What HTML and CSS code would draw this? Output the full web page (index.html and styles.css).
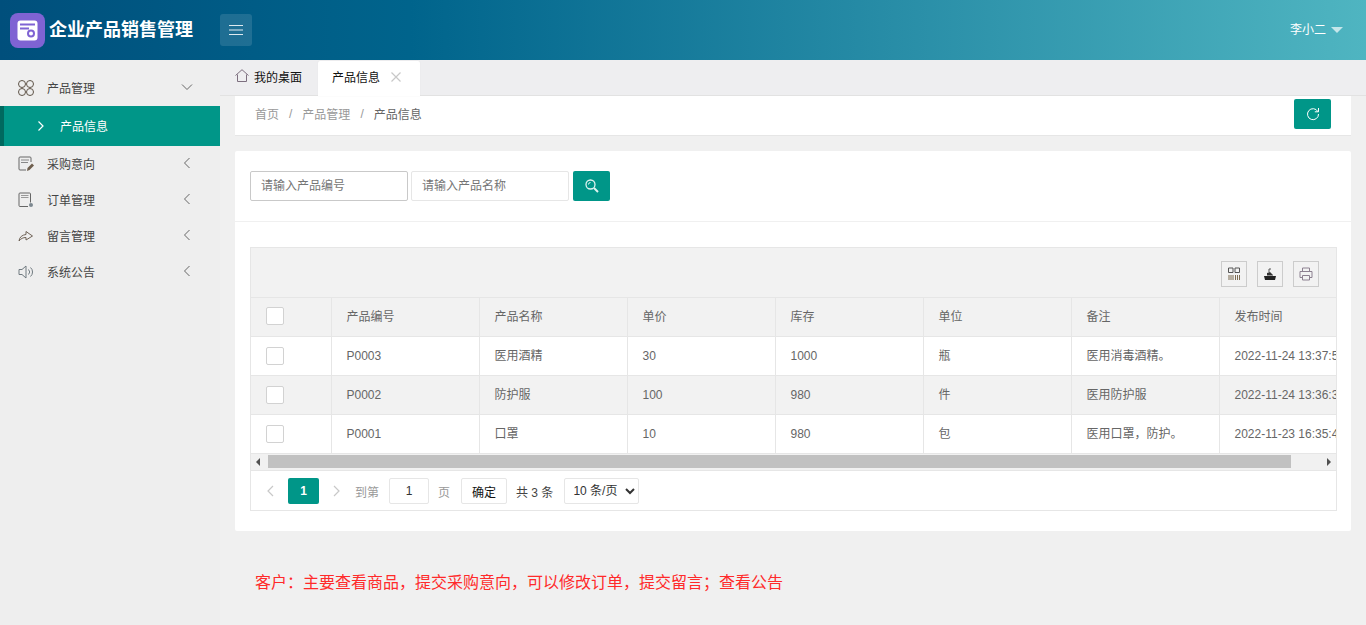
FILE: index.html
```html
<!DOCTYPE html>
<html lang="zh-CN">
<head>
<meta charset="utf-8">
<title>企业产品销售管理</title>
<link rel="stylesheet" href="styles.css">
</head>
<body>
<header class="topbar">
  <div class="brand">
    <span class="logo">
      <svg width="35" height="35" viewBox="0 0 35 35"><rect width="35" height="35" rx="8" fill="#7f63d3"/><rect x="7.500" y="7.500" width="20" height="20" rx="3" fill="#fff"/><path d="M10 11.500h15M10 15.500h9" stroke="#7f63d3" stroke-width="2" fill="none"/><circle cx="21" cy="20.500" r="3" fill="none" stroke="#7f63d3" stroke-width="2"/></svg>
    </span>
    <span class="brand-name">企业产品销售管理</span>
  </div>
  <button class="hamburger" type="button" aria-label="菜单">
    <svg width="14" height="10" viewBox="0 0 14 10"><path d="M0 .5h14M0 5h14M0 9.500h14" stroke="#dfeaf0" stroke-width="1"/></svg>
  </button>
  <div class="user">李小二<span class="caret"></span></div>
</header>
<div class="body-row">
  <aside class="sidebar">
    <div class="menu-item">
      <svg class="menu-icon" viewBox="0 0 16 16"><g fill="none" stroke="#5f5448" stroke-width="1"><circle cx="4" cy="4" r="3.500"/><circle cx="12" cy="4" r="3.500"/><circle cx="4" cy="12" r="3.500"/><circle cx="12" cy="12" r="3.500"/></g></svg>
      <span class="menu-label">产品管理</span>
      <svg class="chev" viewBox="0 0 12 12"><path d="M1 3.500l5 5 5-5" fill="none" stroke="#666" stroke-width="1"/></svg>
    </div>
    <div class="sub-item">
      <svg class="sub-chev" viewBox="0 0 8 12"><path d="M1.500 1.500L6 6l-4.500 4.500" fill="none" stroke="#fff" stroke-width="1.200"/></svg>
      <span class="sub-label">产品信息</span>
    </div>
    <div class="menu-item">
      <svg class="menu-icon" viewBox="0 0 16 16"><path d="M13 6V2a1 1 0 0 0-1-1H2a1 1 0 0 0-1 1v11a1 1 0 0 0 1 1h6" fill="none" stroke="#666"/><path d="M3 4h8M3 6.500h7" stroke="#888"/><path d="M9 15l.5-3L14 7.500l2 2L11.500 14z" fill="#6f5f4e"/></svg>
      <span class="menu-label">采购意向</span>
      <svg class="chev" viewBox="0 0 12 12"><path d="M8.500 1l-5 5 5 5" fill="none" stroke="#666"/></svg>
    </div>
    <div class="menu-item">
      <svg class="menu-icon" viewBox="0 0 16 16"><path d="M10 14.500H2a1 1 0 0 1-1-1V2a1 1 0 0 1 1-1h9.500a1 1 0 0 1 1 1v8.500" fill="none" stroke="#666"/><path d="M3 3.500h7.500M3 5.500h7.500" stroke="#999"/><circle cx="13" cy="13" r="2" fill="#7d8890"/></svg>
      <span class="menu-label">订单管理</span>
      <svg class="chev" viewBox="0 0 12 12"><path d="M8.500 1l-5 5 5 5" fill="none" stroke="#666"/></svg>
    </div>
    <div class="menu-item">
      <svg class="menu-icon" viewBox="0 0 16 16"><path d="M1 13c.5-4 3-6 7-6.500V3.500L14.500 8 8 12V9.500c-3 0-5 1-7 3.500z" fill="none" stroke="#6f6256"/></svg>
      <span class="menu-label">留言管理</span>
      <svg class="chev" viewBox="0 0 12 12"><path d="M8.500 1l-5 5 5 5" fill="none" stroke="#666"/></svg>
    </div>
    <div class="menu-item">
      <svg class="menu-icon" viewBox="0 0 16 16"><path d="M1 5.500h3L8 2v12l-4-3.500H1z" fill="none" stroke="#707a80"/><path d="M10.500 5.500a3.500 3.500 0 0 1 0 5M12.500 3.500a6 6 0 0 1 0 9" fill="none" stroke="#707a80"/></svg>
      <span class="menu-label">系统公告</span>
      <svg class="chev" viewBox="0 0 12 12"><path d="M8.500 1l-5 5 5 5" fill="none" stroke="#666"/></svg>
    </div>
  </aside>
  <main class="main">
    <nav class="tabs">
      <div class="tab">
        <svg class="tab-home" viewBox="0 0 14 13"><path d="M.5 6.500L7 .7l6.500 5.800M2.500 5.500v7h9v-7" fill="none" stroke="#7d6f7f"/></svg>
        <span>我的桌面</span>
      </div>
      <div class="tab tab-active">
        <span>产品信息</span>
        <svg class="tab-close" viewBox="0 0 10 10"><path d="M.5.500l9 9M9.500.500l-9 9" stroke="#c8c8c8" stroke-width="1.200"/></svg>
      </div>
    </nav>
    <div class="content">
      <div class="crumbs">
        <span class="crumb">首页</span><span class="sep">/</span>
        <span class="crumb">产品管理</span><span class="sep">/</span>
        <span class="crumb crumb-current">产品信息</span>
        <button class="btn btn-refresh" type="button" aria-label="刷新">
          <svg width="14" height="14" viewBox="0 0 14 14"><path d="M11.800 4.500A5.500 5.500 0 1 0 12.500 7" fill="none" stroke="#fff"/><path d="M12.500 1v3.800H8.800" fill="none" stroke="#fff"/></svg>
        </button>
      </div>
      <section class="card">
        <div class="search">
          <input class="field field-focus" placeholder="请输入产品编号">
          <input class="field" placeholder="请输入产品名称">
          <button class="btn btn-search" type="button" aria-label="搜索">
            <svg width="14" height="14" viewBox="0 0 14 14"><circle cx="5.500" cy="5.500" r="4.500" fill="none" stroke="#dff3f0" stroke-width="1.300"/><path d="M9 9l4 4" stroke="#dff3f0" stroke-width="2"/><path d="M3.500 5.500a2 2 0 0 1 2-2" fill="none" stroke="#dff3f0"/></svg>
          </button>
        </div>
        <div class="table-wrap">
          <div class="table-box">
            <div class="toolbar">
              <span class="tool"><svg width="12" height="14" viewBox="0 0 12 14"><path d="M.5 1h4.500v4.500H.5zM7 1h4.500v4.500H7z" fill="none" stroke="#555"/><path d="M1 8v5M3 8v5M5 8v5M7.500 8v5M9.500 8v5M11.500 8v5" stroke="#7b6a50"/></svg></span>
              <span class="tool"><svg width="14" height="14" viewBox="0 0 14 14"><path d="M1 9h12l-1 4H2z" fill="#222"/><path d="M4 8.500V6l3-1 3 3v.5z" fill="#333"/><path d="M6 5V2h2" fill="none" stroke="#555"/></svg></span>
              <span class="tool"><svg width="14" height="14" viewBox="0 0 14 14"><path d="M3.500 4V1h7v3M3.500 10.500H1V4.500h12v6h-2.500M3.500 8.500h7V13h-7z" fill="none" stroke="#8c8090"/></svg></span>
            </div>
            <div class="grid-clip">
              <table class="grid">
                <colgroup><col class="col-check"><col class="col-data"><col class="col-data"><col class="col-data"><col class="col-data"><col class="col-data"><col class="col-data"><col class="col-data"></colgroup>
                <thead>
                  <tr><th class="c-check"><span class="check"></span></th><th>产品编号</th><th>产品名称</th><th>单价</th><th>库存</th><th>单位</th><th>备注</th><th>发布时间</th></tr>
                </thead>
                <tbody>
                  <tr><td class="c-check"><span class="check"></span></td><td>P0003</td><td>医用酒精</td><td>30</td><td>1000</td><td>瓶</td><td>医用消毒酒精。</td><td>2022-11-24 13:37:58</td></tr>
                  <tr class="alt"><td class="c-check"><span class="check"></span></td><td>P0002</td><td>防护服</td><td>100</td><td>980</td><td>件</td><td>医用防护服</td><td>2022-11-24 13:36:32</td></tr>
                  <tr><td class="c-check"><span class="check"></span></td><td>P0001</td><td>口罩</td><td>10</td><td>980</td><td>包</td><td>医用口罩，防护。</td><td>2022-11-23 16:35:47</td></tr>
                </tbody>
              </table>
            </div>
            <div class="hscroll">
              <span class="arrow arrow-left"></span>
              <span class="thumb"></span>
              <span class="arrow arrow-right"></span>
            </div>
            <div class="pager">
              <svg class="page-arrow" viewBox="0 0 8 12"><path d="M7 1L2 6l5 5" fill="none" stroke="#c8c8c8" stroke-width="1.200"/></svg>
              <span class="page-current">1</span>
              <svg class="page-arrow page-next" viewBox="0 0 8 12"><path d="M1 1l5 5-5 5" fill="none" stroke="#c8c8c8" stroke-width="1.200"/></svg>
              <span class="pager-muted">到第</span>
              <input class="page-input" value="1">
              <span class="pager-muted">页</span>
              <button class="page-ok" type="button">确定</button>
              <span class="pager-total">共 3 条</span>
              <select class="page-size"><option>10 条/页</option></select>
            </div>
          </div>
        </div>
      </section>
      <p class="note">客户：主要查看商品，提交采购意向，可以修改订单，提交留言；查看公告</p>
    </div>
  </main>
</div>
</body>
</html>
```
FILE: styles.css
```css
* { box-sizing: border-box; }
html, body { margin: 0; height: 625px; overflow: hidden; }
body {
  font-family: "Liberation Sans", "Noto Sans CJK SC", sans-serif;
  font-size: 12px;
  color: #666;
  background: #f0f0f0;
}
button, input, select { font-family: inherit; }

.topbar {
  height: 60px;
  display: flex;
  align-items: center;
  background: linear-gradient(to right, #004f7c 0%, #00648c 30%, #4fb5c1 100%);
}
.brand { width: 220px; display: flex; align-items: center; padding-left: 10px; gap: 4px; }
.logo { width: 35px; height: 35px; display: block; }
.logo svg { display: block; }
.brand-name { font-size: 18px; font-weight: 700; color: #fff; line-height: 35px; }
.hamburger {
  width: 32px; height: 32px; padding: 0; border: 0; border-radius: 3px;
  background: rgba(255, 255, 255, .12);
  display: flex; align-items: center; justify-content: center;
}
.user { margin-left: auto; margin-right: 23px; padding-bottom: 4px; color: #fff; display: flex; align-items: center; }
.caret {
  margin-left: 5px; margin-top: 4px; width: 0; height: 0;
  border: 6px solid transparent; border-top: 6px solid #c5e6ea; border-bottom: 0;
}

.body-row { display: flex; height: 565px; }
.sidebar { width: 220px; flex: none; background: #eeeeee; padding-top: 10px; }
.menu-item {
  height: 36px; display: flex; align-items: center; padding-left: 18px; color: #444;
}
.menu-icon { width: 16px; height: 16px; flex: none; }
.menu-label { margin: -2px 0 0 13px; flex: 1; }
.chev { width: 12px; height: 12px; flex: none; margin-right: 27px; margin-top: -2px; }
.sub-item {
  height: 40px; display: flex; align-items: center; padding-left: 33px;
  background: #009688; color: #fff; border-left: 4px solid #00695f;
}
.sub-chev { width: 8px; height: 12px; margin-right: 15px; }
.sub-label { margin-top: -2px; }

.main { flex: 1; min-width: 0; }
.tabs {
  height: 36px; display: flex; align-items: flex-end;
  background: #eeeef0; border-bottom: 1px solid #e2e2e2;
}
.tab {
  height: 35px; width: 98px; display: flex; align-items: center; padding: 0 0 2px 15px; color: #111;
}
.tab-home { width: 14px; height: 13px; margin-right: 5px; margin-top: -3px; }
.tab-active {
  width: 102px; margin-bottom: -1px; background: #fff; padding: 0 0 4px 14px;
  border-radius: 2px 2px 0 0; box-shadow: 0 0 1px #ddd;
}
.tab-close { width: 10px; height: 10px; margin-left: 11px; }

.content { padding: 0 15px; }
.crumbs {
  height: 40px; background: #fff; border-bottom: 1px solid #e6e6e6; display: flex;
  align-items: center; padding: 0 0 4px 20px; color: #999;
}
.sep { margin: 0 10px; color: #999; }
.crumb-current { color: #666; }
.btn {
  border: 0; background: #009688; border-radius: 2px; width: 37px; height: 30px; padding: 0;
  display: flex; align-items: center; justify-content: center;
}
.btn-refresh { margin: 3px 20px 0 auto; align-self: flex-start; }

.card { margin-top: 15px; background: #fff; height: 380px; border-radius: 2px; }
.search { height: 71px; display: flex; align-items: center; padding: 0 15px 1px; border-bottom: 1px solid #f0f0f0; gap: 3px; }
.field {
  width: 158px; height: 30px; border: 1px solid #e6e6e6; border-radius: 2px; padding: 0 10px;
  font-size: 12px; background: #fff; outline: 0; color: #666;
}
.field::placeholder { color: #757575; opacity: 1; }
.field-focus { border-color: #c9c9c9; }
.btn-search { margin-left: 1px; }

.table-wrap { padding: 25px 14px 0 15px; }
.table-box { border: 1px solid #e6e6e6; width: 1087px; }
.toolbar {
  height: 50px; background: #f2f2f2; border-bottom: 1px solid #e6e6e6;
  display: flex; justify-content: flex-end; align-items: center; gap: 10px; padding: 2px 17px 0 0;
}
.tool {
  width: 26px; height: 26px; border: 1px solid #ccc; display: flex; align-items: center; justify-content: center;
}
.grid-clip { overflow: hidden; }
.grid { border-collapse: collapse; table-layout: fixed; width: 1116px; line-height: 18px; }
.col-check { width: 80px; }
.col-data { width: 148px; }
.grid th, .grid td {
  height: 39px; padding: 0 15px; text-align: left; font-weight: 400; color: #666;
  border-right: 1px solid #e6e6e6; border-bottom: 1px solid #e6e6e6; white-space: nowrap;
}
.grid th { background: #f2f2f2; height: 38px; }
.grid th:last-child, .grid td:last-child { border-right: 0; }
.grid .c-check { padding: 0 0 0 15px; }
.grid th.c-check { padding-bottom: 1px; }
.grid tr.alt td { background: #f2f2f2; }
.check {
  display: block; width: 18px; height: 18px; background: #fff; border: 1px solid #d2d2d2; border-radius: 2px;
}
.hscroll {
  height: 17px; background: #f1f1f1; display: flex; align-items: center; border-bottom: 1px solid #e6e6e6;
}
.thumb { margin-left: 8px; width: 1023px; height: 13px; background: #c1c1c1; }
.arrow { width: 0; height: 0; border: 4px solid transparent; }
.arrow-left { margin-left: 5px; border-right-color: #505050; border-left: 0; }
.arrow-right { margin-left: 36px; border-left-color: #505050; border-right: 0; }
.pager { height: 39px; display: flex; align-items: center; padding: 2px 0 0 14px; color: #333; }
.page-arrow { width: 8px; height: 12px; flex: none; margin-left: 1px; }
.page-current {
  width: 31px; height: 26px; margin-left: 14px; background: #009688; color: #fff; border-radius: 2px;
  display: flex; align-items: center; justify-content: center; font-weight: 700;
}
.page-next { margin-left: 14px; }
.pager-muted { color: #999; margin-left: 14px; }
.page-input {
  width: 40px; height: 26px; margin-left: 10px; border: 1px solid #e6e6e6; border-radius: 2px;
  text-align: center; font-size: 12px; color: #333; padding: 0; outline: 0;
}
.page-input + .pager-muted { margin-left: 9px; }
.page-ok {
  width: 46px; height: 26px; margin-left: 11px; border: 1px solid #e6e6e6; border-radius: 2px; background: #fff;
  font-size: 12px; color: #111; padding: 0;
}
.pager-total { margin-left: 9px; color: #444; }
.page-size {
  width: 75px; height: 26px; margin-left: 11px; border: 1px solid #e6e6e6; border-radius: 2px;
  background: #fff; font-size: 12px; color: #333; padding: 0 0 0 4px;
}
.note { margin: 43px 0 0 20px; font-size: 16px; line-height: 18px; color: #ff2a2a; }
```
